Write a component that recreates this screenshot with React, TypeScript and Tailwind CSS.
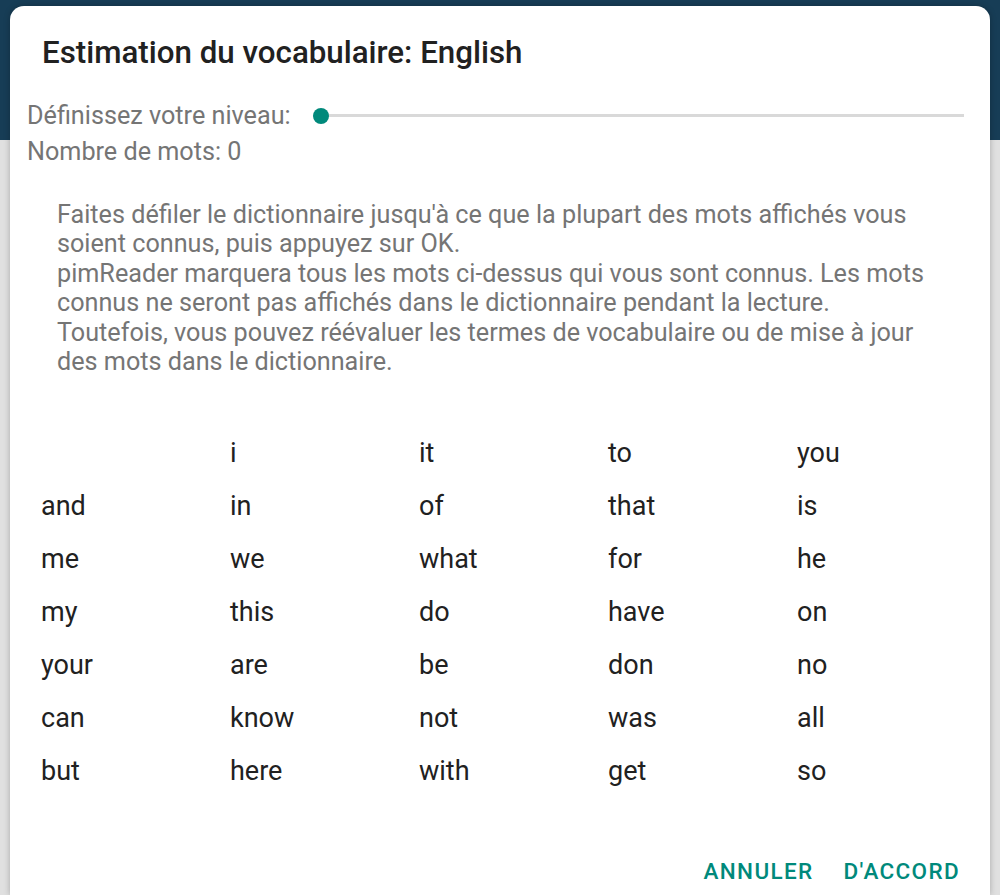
import React from "react";

const rows: string[][] = [
  ["", "i", "it", "to", "you"],
  ["and", "in", "of", "that", "is"],
  ["me", "we", "what", "for", "he"],
  ["my", "this", "do", "have", "on"],
  ["your", "are", "be", "don", "no"],
  ["can", "know", "not", "was", "all"],
  ["but", "here", "with", "get", "so"],
];

const paragraph = [
  "Faites défiler le dictionnaire jusqu'à ce que la plupart des mots affichés vous",
  "soient connus, puis appuyez sur OK.",
  "pimReader marquera tous les mots ci-dessus qui vous sont connus. Les mots",
  "connus ne seront pas affichés dans le dictionnaire pendant la lecture.",
  "Toutefois, vous pouvez réévaluer les termes de vocabulaire ou de mise à jour",
  "des mots dans le dictionnaire.",
];

export default function App() {
  return (
    <div
      className="w-[1000px] h-[895px] overflow-hidden bg-[linear-gradient(to_bottom,#173d56_0px,#173d56_140px,#e0e0e0_140px)] pt-[6px] px-[10px]"
      style={{ fontFamily: "Roboto, 'Noto Sans', sans-serif" }}
    >
      <div className="h-[889px] bg-white rounded-t-[14px] shadow-[0_0_6px_rgba(0,0,0,0.25)] flex flex-col">
        <div className="pt-[29px] pl-[32px] text-[31.3px] leading-[36px] font-medium text-[#212121]">
          Estimation du vocabulaire: English
        </div>

        <div className="mt-[30px] pl-[17px] flex items-center h-[29px]">
          <span className="w-[280px] flex-none text-[25.2px] leading-[29px] text-[#757575] whitespace-nowrap">
            Définissez votre niveau:
          </span>
          <div className="ml-[6px] w-[659px] px-[8px] h-[16px] flex items-center">
            <div className="relative w-full h-[3px] bg-[#d9d9d9]">
              <div className="absolute left-[-8px] top-[-6.5px] w-[16px] h-[16px] rounded-full bg-[#00897b]" />
            </div>
          </div>
        </div>

        <div className="mt-[7px] pl-[17px] text-[25.2px] leading-[29px] text-[#757575]">
          Nombre de mots: 0
        </div>

        <div className="mt-[34px] pl-[47px] text-[25.2px] leading-[29.4px] text-[#757575]">
          {paragraph.map((l, i) => (
            <div key={i} className="whitespace-nowrap">
              {l}
            </div>
          ))}
        </div>

        <div className="mt-[50px] h-[386px] overflow-hidden pl-[31px]">
          {rows.map((r, i) => (
            <div key={i} className="grid grid-cols-[189px_189px_189px_189px_189px] h-[53px] items-center">
              {r.map((w, j) => (
                <div key={j} className="text-[27px] leading-[32px] text-[#212121]">
                  {w}
                </div>
              ))}
            </div>
          ))}
        </div>

        <div className="mt-[46px] pr-[30px] flex justify-end gap-[30px] text-[22.5px] leading-[27px] tracking-[0.06em] font-medium text-[#00897b]">
          <span>ANNULER</span>
          <span>D'ACCORD</span>
        </div>
      </div>
    </div>
  );
}
